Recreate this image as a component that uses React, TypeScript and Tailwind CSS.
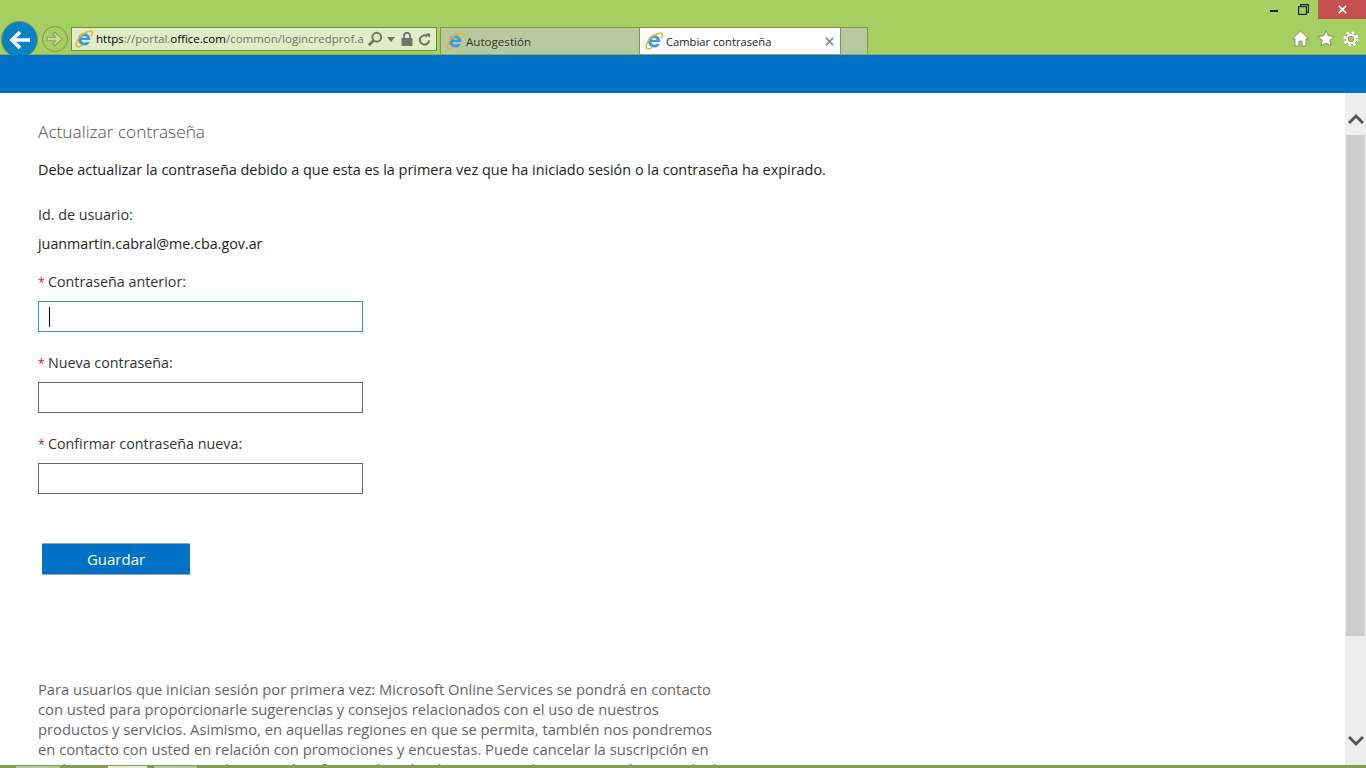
import React from 'react';

const sans = { fontFamily: '"Open Sans", sans-serif' };

function IeIcon({ className = '' }: { className?: string }) {
  return (
    <svg viewBox="0 0 20 20" width="18" height="18" className={className}>
      <path d="M10.300 3.300a6.900 6.900 0 0 0-6.900 6.900 6.900 6.900 0 0 0 13.100 3h-3.900a3.200 3.200 0 0 1-5.400-2h9.700a6.900 6.900 0 0 0-6.600-7.900zM7.300 8.700a3.100 3.100 0 0 1 5.900 0z" fill="#3d9ce0" fillRule="evenodd" />
      <path d="M1.900 13.200C3.400 8.800 8.400 3.600 13.500 1.900c3.400-1.100 5.600-.6 5.800 1.100.1 1.100-.5 2.500-1.700 3.900" fill="none" stroke="#f2b01e" strokeWidth="1.700" />
      <path d="M1.900 13.200c-1.100 3.200-.6 5.300 1.300 5.500 1.500.2 3.300-.5 5-1.600" fill="none" stroke="#f2b01e" strokeWidth="1.700" />
    </svg>
  );
}

function AddressBar() {
  return (
    <div className="ml-[3px] mt-[27px] flex h-[24px] w-[366px] items-center border border-[#6f8f3f] bg-[#e2edc8] pl-[3px]">
      <IeIcon />
      <div className="ml-[3px] w-[269px] overflow-hidden whitespace-nowrap text-[11.500px] text-[#6b7560]" style={sans}>
        <span className="text-black">https</span>://portal.<span className="text-black">office.com</span>/common/logincredprof.a
      </div>
      <svg viewBox="0 0 16 16" width="16" height="16" className="ml-[2px]" fill="none" stroke="#6f7568" strokeWidth="2">
        <circle cx="9.800" cy="6.200" r="4.400" />
        <path d="M6.500 9.500 1.800 14.200" strokeWidth="2.800" />
      </svg>
      <svg viewBox="0 0 8 5" width="8" height="5" className="ml-[4px]"><path d="M0 0h8L4 5z" fill="#6f7568" /></svg>
      <svg viewBox="0 0 12 14" width="12" height="14" className="ml-[6px]" fill="#6f7568">
        <rect x="0.500" y="6" width="11" height="8" />
        <path d="M3 6V3.800a3 3 0 0 1 6 0V6" fill="none" stroke="#6f7568" strokeWidth="1.800" />
      </svg>
      <svg viewBox="0 0 14 14" width="13" height="13" className="ml-[5px]" fill="none" stroke="#6f7568" strokeWidth="2.200">
        <path d="M12 8a5 5 0 1 1-1.800-4.400" />
        <path d="M8 0.500h5V5.500z" fill="#6f7568" stroke="none" />
      </svg>
    </div>
  );
}

function Field({ label, focused }: { label: string; focused?: boolean }) {
  return (
    <div className="mb-[21px]">
      <div className="h-[20px] text-[14.300px] leading-[20px] text-[#333]">
        <span className="inline-block w-[10px] text-[12px] text-[#c8102e]">*</span>{label}
      </div>
      <div className={`mt-[9px] flex h-[31px] w-[325px] items-center border bg-white pl-[10px] ${focused ? 'border-[#2f8fd8]' : 'border-[#666]'}`}>
        {focused && <div className="h-[20px] w-px bg-black" />}
      </div>
    </div>
  );
}

export default function App() {
  return (
    <div className="flex h-screen w-[1366px] flex-col overflow-hidden bg-white" style={sans}>
      {/* browser chrome */}
      <div className="flex h-[55px] shrink-0 border-b border-[#8fae55] bg-[#a5cf60]">
        <div className="mt-[21px] ml-[1px] flex h-[37px] w-[37px] items-center justify-center rounded-full border border-[#7b9a48] bg-[#0a82c4]">
          <svg viewBox="0 0 24 24" width="24" height="24" fill="none" stroke="#fff" strokeWidth="3.600">
            <path d="M22 12H5M12 4l-8 8 8 8" />
          </svg>
        </div>
        <div className="mt-[26px] ml-[4px] flex h-[26px] w-[26px] items-center justify-center rounded-full border border-[#7b9a48]">
          <svg viewBox="0 0 16 16" width="18" height="18" fill="#c9dca3" stroke="#869f5c" strokeWidth="0.900">
            <path d="M1 6.500h7.500L6 3.200 7.600 2 14.500 8l-6.900 6L6 12.800l2.500-3.300H1z" />
          </svg>
        </div>
        <AddressBar />
        <div className="ml-[3px] mt-[27px] flex h-[27px] items-stretch">
          <div className="flex w-[200px] items-center border-x border-t border-[#7b9a48] bg-[#b9c99f] pl-[5px] text-[11.600px] text-[#333]">
            <IeIcon />
            <span className="ml-[2px] mt-[2px]">Autogestión</span>
          </div>
          <div className="flex w-[200px] items-center border-t border-[#7b9a48] bg-white pl-[5px] text-[11.200px] text-[#222]">
            <IeIcon />
            <span className="ml-[3px] mt-[2px]">Cambiar contraseña</span>
            <svg viewBox="0 0 10 10" width="9" height="9" className="ml-auto mr-[6px]" stroke="#8a8a8a" strokeWidth="2">
              <path d="M1 1l8 8M9 1l-8 8" />
            </svg>
          </div>
          <div className="w-[28px] border-x border-t border-[#7b9a48] bg-[#b9c99f]" />
        </div>
        <div className="ml-auto flex w-[130px] flex-col items-end">
          <div className="flex h-[19px] items-start">
            <div className="mt-[10px] mr-[20px] h-[2px] w-[8px] bg-[#222]" />
            <svg viewBox="0 0 11 11" width="11" height="11" className="mt-[4px] mr-[9px]" fill="none" stroke="#222" strokeWidth="1.200">
              <rect x="0.600" y="2.600" width="7.800" height="7.800" />
              <path d="M2.600 2.600V0.600h7.800v7.800H8.400" />
            </svg>
            <div className="flex h-[19px] w-[48px] items-center justify-center bg-[#c75050]">
              <svg viewBox="0 0 10 10" width="9" height="9" stroke="#fff" strokeWidth="1.800">
                <path d="M1 1l8 8M9 1l-8 8" />
              </svg>
            </div>
          </div>
          <div className="mt-[11px] flex items-center gap-[8px] pr-[7px]">
            <svg viewBox="0 0 16 16" width="17" height="17" fill="#fff" stroke="#6a7a55" strokeWidth="0.700">
              <path d="M8 1 .4 8.300h2.400V15h3.700v-4.500h3V15h3.700V8.300h2.400z" />
            </svg>
            <svg viewBox="0 0 16 16" width="18" height="17" fill="#fff" stroke="#6a7a55" strokeWidth="0.700">
              <path d="M8 .5l2.200 5 5.500.5-4.100 3.600 1.200 5.400L8 12.200 3.200 15l1.200-5.400L.3 6l5.500-.5z" />
            </svg>
            <svg viewBox="0 0 16 16" width="16" height="16" fill="none">
              <circle cx="8" cy="8" r="4.300" stroke="#6a7a55" strokeWidth="3.600" />
              <circle cx="8" cy="8" r="6.200" stroke="#fff" strokeWidth="2.600" strokeDasharray="2.400 2.470" />
              <circle cx="8" cy="8" r="4.300" stroke="#fff" strokeWidth="2.400" />
            </svg>
          </div>
        </div>
      </div>

      {/* blue page header */}
      <div className="h-[38px] shrink-0 bg-[#0072c6]" />

      <div className="flex min-h-0 flex-1">
        <main className="min-w-0 flex-1 overflow-hidden pl-[38px] pt-[28px]">
          <h1 className="h-[22px] text-[17.300px] font-light leading-[22px] text-[#505050]">Actualizar contraseña</h1>
          <p className="mt-[17px] h-[20px] text-[14.450px] leading-[20px] text-[#222]">
            Debe actualizar la contraseña debido a que esta es la primera vez que ha iniciado sesión o la contraseña ha expirado.
          </p>
          <div className="mt-[25px] h-[20px] text-[14.300px] leading-[20px] text-[#333]">Id. de usuario:</div>
          <div className="mt-[9px] h-[20px] text-[14.300px] leading-[20px] text-[#222]">juanmartin.cabral@me.cba.gov.ar</div>
          <div className="mt-[18px]">
            <Field label="Contraseña anterior:" focused />
            <Field label="Nueva contraseña:" />
            <Field label="Confirmar contraseña nueva:" />
          </div>
          <button className="mt-[49px] ml-[4px] block h-[32px] w-[148px] border-t border-b border-t-[#a0a0a0] border-b-[#a0a0a0] bg-[#0072c6] text-[15px] text-white">
            Guardar
          </button>
          <p className="mt-[104px] w-[720px] whitespace-nowrap text-[14.750px] leading-[20px] text-[#666]">
            Para usuarios que inician sesión por primera vez: Microsoft Online Services se pondrá en contacto<br />
            con usted para proporcionarle sugerencias y consejos relacionados con el uso de nuestros<br />
            productos y servicios. Asimismo, en aquellas regiones en que se permita, también nos pondremos<br />
            en contacto con usted en relación con promociones y encuestas. Puede cancelar la suscripción en<br />
            cualquier momento. Para obtener más información sobre las opciones de comunicación, consulte la
          </p>
        </main>
        <div className="flex w-[21px] shrink-0 flex-col items-center bg-[#eeeeee] px-[1px]">
          <div className="flex h-[42px] items-start justify-center pt-[20px]">
            <svg viewBox="0 0 16 10" width="16" height="12" fill="none" stroke="#555" strokeWidth="3"><path d="M1 9l7-7 7 7" /></svg>
          </div>
          <div className="h-[501px] w-full bg-[#cdcdcd]" />
          <div className="mt-auto flex h-[40px] items-start justify-center pt-[10px]">
            <svg viewBox="0 0 16 10" width="16" height="12" fill="none" stroke="#555" strokeWidth="3"><path d="M1 1l7 7 7-7" /></svg>
          </div>
        </div>
      </div>

      {/* taskbar edge */}
      <div className="flex h-[3px] shrink-0 items-end bg-[#7f9f55]">
        <div className="ml-[16px] h-[2px] w-[44px] bg-[#b9c99f]" />
        <div className="ml-[48px] h-[2px] w-[39px] bg-[#e6ecd8]" />
        <div className="ml-[7px] h-[2px] w-[43px] bg-[#b9c99f]" />
      </div>
    </div>
  );
}
